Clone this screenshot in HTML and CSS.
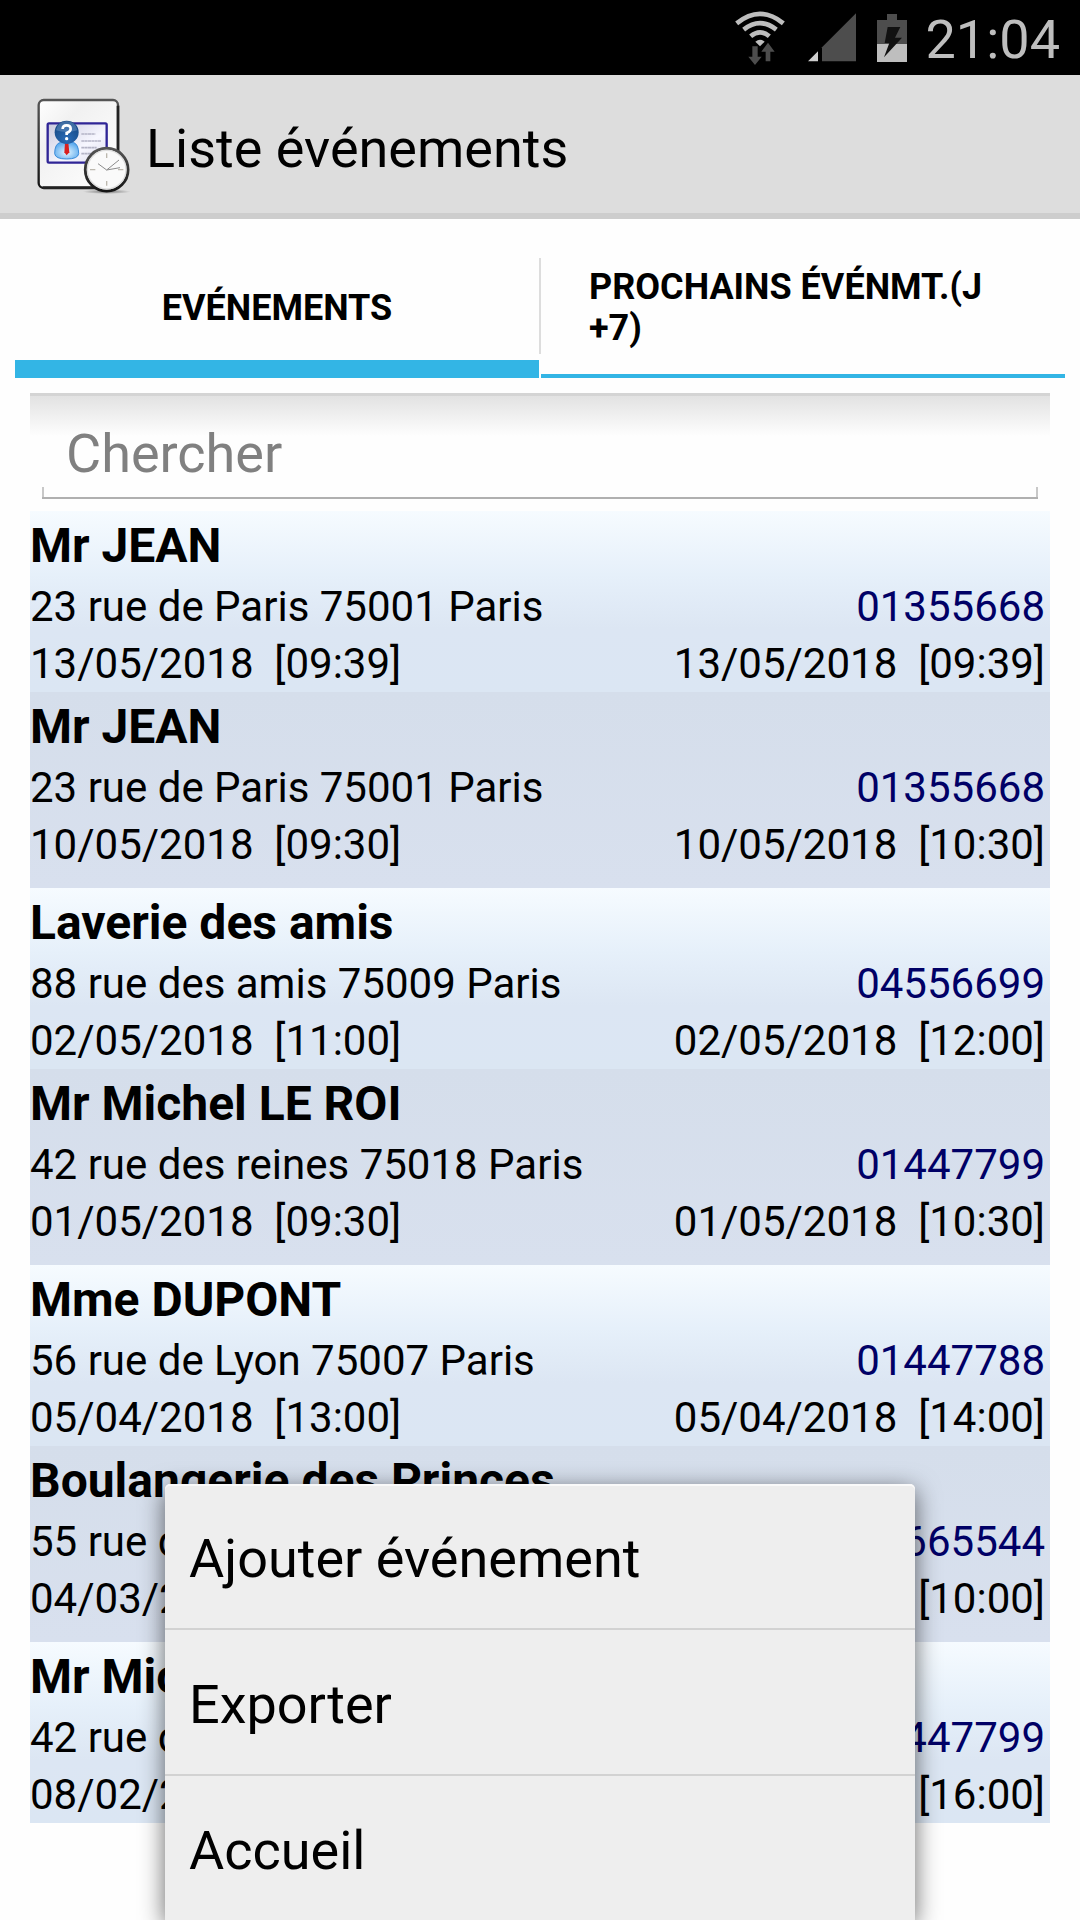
FILE: index.html
```html
<!DOCTYPE html>
<html lang="fr">
<head>
    <meta charset="UTF-8">
    <meta name="viewport" content="width=device-width, initial-scale=1.0">
    <title>Liste événements</title>
    <link rel="stylesheet" href="styles.css">
</head>
<body>

<div id="status-bar">
    <!-- Wifi -->
    <svg class="wifi" width="50" height="54" viewBox="0 0 150 162" fill="none">
        <g stroke="#bebebe" stroke-width="14">
            <path d="M5 37Q75 -20 145 37"/>
            <path d="M26 56Q75 17 124 56"/>
            <path d="M47 76Q75 52 103 76"/>
        </g>
        <path d="M61 92Q75 80 89 92L75 106Z" fill="#bebebe"/>
        <path d="M52 106H68V137H80L60 162L40 137H52ZM92 151V122H79L99 95L119 122H106V151Z" fill="#4d4d4d"/>
    </svg>
    <!-- Signal -->
    <svg class="signal" width="48" height="49" viewBox="0 0 144 147">
        <path d="M0 145L30 115V145Z" fill="#cfcfcf"/>
        <path d="M42 103L144 1V145H42Z" fill="#4d4d4d"/>
    </svg>
    <!-- Battery -->
    <svg class="battery" width="30" height="48" viewBox="0 0 90 144">
        <path d="M30 0H60V18H90V90H0V18H30Z" fill="#4d4d4d"/>
        <path d="M0 90H90V144H0Z" fill="#bebebe"/>
        <path d="M32 39H70L54 71H75L21 130L37 87H23Z" fill="#111"/>
    </svg>
    <span id="clock">21:04</span>
</div>

<div id="header">
    <svg width="110" height="110" viewBox="0 0 330 330">
        <defs>
            <linearGradient id="sheet" x1="0" y1="0" x2="1" y2="1">
                <stop offset="0" stop-color="#fff"/>
                <stop offset="0.3" stop-color="#f1f1f1"/>
                <stop offset="1" stop-color="#fff"/>
            </linearGradient>
            <linearGradient id="edge" x1="0" y1="0" x2="0" y2="1">
                <stop offset="0" stop-color="#555"/>
                <stop offset="1" stop-color="#151515"/>
            </linearGradient>
            <linearGradient id="card" x1="0" y1="0" x2="1" y2="1">
                <stop offset="0" stop-color="#c9c9dd"/>
                <stop offset="0.6" stop-color="#f7f7ff"/>
                <stop offset="1" stop-color="#dcdcec"/>
            </linearGradient>
            <radialGradient id="head" cx="0.5" cy="0.8" r="0.8">
                <stop offset="0" stop-color="#2a6cb8"/>
                <stop offset="1" stop-color="#14457f"/>
            </radialGradient>
            <radialGradient id="bust" cx="0.5" cy="0.6" r="0.6">
                <stop offset="0" stop-color="#e6f6ff"/>
                <stop offset="1" stop-color="#5aa9ee"/>
            </radialGradient>
            <radialGradient id="shade">
                <stop offset="0" stop-color="#777"/>
                <stop offset="1" stop-color="#777" stop-opacity="0"/>
            </radialGradient>
        </defs>
        <rect x="26" y="33" width="238" height="264" rx="15" fill="url(#sheet)" stroke="url(#edge)" stroke-width="7"/>
        <path d="M38 296H250Q264 296 264 280V50" fill="none" stroke="#222" stroke-width="8"/>
        <rect x="53" y="103" width="177" height="118" rx="4" fill="url(#card)" stroke="#2f2596" stroke-width="7"/>
        <g stroke="#b4b4c6" stroke-width="5" stroke-dasharray="9 1">
            <path d="M154 135H196M154 156H213M154 176H200M154 194H190"/>
        </g>
        <path d="M74 194Q74 164 92 160H130Q146 166 146 194Q144 210 110 210Q76 210 74 194Z" fill="url(#bust)" stroke="#3b8bd8" stroke-width="3"/>
        <path d="M105 162H115L118 190L110 199L103 190Z" fill="#d92020"/>
        <ellipse cx="110" cy="130" rx="36" ry="35" fill="url(#head)"/>
        <path d="M78 124Q82 98 110 96Q138 98 142 124Q110 134 78 124Z" fill="#7fa6cf" opacity="0.4"/>
        <path d="M98 120Q98 109 110 109Q122 109 122 120Q122 127 110 132V138" fill="none" stroke="#fff" stroke-width="8"/>
        <circle cx="110" cy="149" r="5" fill="#fff"/>
        <ellipse cx="230" cy="308" rx="72" ry="7" fill="url(#shade)"/>
        <circle cx="230" cy="242" r="64" fill="#fafafa" stroke="url(#edge)" stroke-width="9"/>
        <circle cx="230" cy="242" r="58" fill="none" stroke="#ddd" stroke-width="4"/>
        <path d="M230 193V207M230 276V290M180 242H196M264 242H280" stroke="#bcb8ae" stroke-width="4"/>
        <path d="M230 243L267 213M230 243L204 224M230 243L270 236" stroke="#8c8c8c" stroke-width="3" fill="none"/>
    </svg>
    <h1>Liste événements</h1>
</div>

<div id="tabs" role="tablist">
    <button class="tab active" type="button" role="tab" aria-selected="true"><span>EVÉNEMENTS</span></button>
    <div class="divider"></div>
    <button class="tab" type="button" role="tab" aria-selected="false"><span>PROCHAINS ÉVÉNMT.(J<wbr>+7)</span></button>
</div>

<div id="content">
    <div id="search-box">
        <input id="search" type="text" placeholder="Chercher" aria-label="Chercher">
    </div>

    <ul id="events">
        <li class="event">
            <h2>Mr JEAN</h2>
            <div class="line"><span>23 rue de Paris 75001 Paris</span><a href="tel:01355668">01355668</a></div>
            <div class="line"><span>13/05/2018  [09:39]</span><span>13/05/2018  [09:39]</span></div>
        </li>
        <li class="event">
            <h2>Mr JEAN</h2>
            <div class="line"><span>23 rue de Paris 75001 Paris</span><a href="tel:01355668">01355668</a></div>
            <div class="line"><span>10/05/2018  [09:30]</span><span>10/05/2018  [10:30]</span></div>
        </li>
        <li class="event">
            <h2>Laverie des amis</h2>
            <div class="line"><span>88 rue des amis 75009 Paris</span><a href="tel:04556699">04556699</a></div>
            <div class="line"><span>02/05/2018  [11:00]</span><span>02/05/2018  [12:00]</span></div>
        </li>
        <li class="event">
            <h2>Mr Michel LE ROI</h2>
            <div class="line"><span>42 rue des reines 75018 Paris</span><a href="tel:01447799">01447799</a></div>
            <div class="line"><span>01/05/2018  [09:30]</span><span>01/05/2018  [10:30]</span></div>
        </li>
        <li class="event">
            <h2>Mme DUPONT</h2>
            <div class="line"><span>56 rue de Lyon 75007 Paris</span><a href="tel:01447788">01447788</a></div>
            <div class="line"><span>05/04/2018  [13:00]</span><span>05/04/2018  [14:00]</span></div>
        </li>
        <li class="event">
            <h2>Boulangerie des Princes</h2>
            <div class="line"><span>55 rue de Paris 75001 Paris</span><a href="tel:01665544">01665544</a></div>
            <div class="line"><span>04/03/2018  [09:00]</span><span>04/03/2018  [10:00]</span></div>
        </li>
        <li class="event">
            <h2>Mr Michel LE ROI</h2>
            <div class="line"><span>42 rue des reines 75018 Paris</span><a href="tel:01447799">01447799</a></div>
            <div class="line"><span>08/02/2018  [15:00]</span><span>08/02/2018  [16:00]</span></div>
        </li>
    </ul>
</div>

<!-- Options menu -->
<div id="menu" role="menu">
    <button type="button" role="menuitem">Ajouter événement</button>
    <button type="button" role="menuitem">Exporter</button>
    <button type="button" role="menuitem">Accueil</button>
</div>

</body>
</html>
```
FILE: styles.css
```css
* {
    box-sizing: border-box;
}
body {
    font-family: Roboto, sans-serif;
    margin: 0;
    background-color: #fefefe;
    color: #000;
}
h1, h2 {
    margin: 0;
}
button, input {
    font-family: inherit;
    color: inherit;
    border: none;
    border-radius: 0;
}
#status-bar {
    height: 75px;
    padding: 0 20px;
    background-color: #000;
    display: flex;
    align-items: center;
    justify-content: flex-end;
}
.wifi {
    margin-right: 23px;
}
.signal {
    margin-right: 21px;
}
.battery {
    margin-right: 19px;
}
#clock {
    font-size: 54px;
    line-height: 64px;
    padding-top: 4px;
    color: #bebebe;
}
#header {
    height: 144px;
    padding: 0 30px;
    background-color: #ddd;
    border-bottom: 6px solid #cdcdcd;
    display: flex;
    align-items: center;
    gap: 6px;
}
#header h1 {
    font-size: 54px;
    line-height: 64px;
    font-weight: normal;
    padding-top: 10px;
}
#tabs {
    display: flex;
    align-items: center;
    padding: 15px 15px 0;
}
.tab {
    flex: 1;
    height: 144px;
    padding: 4px 48px 0;
    background: none;
    box-shadow: inset 0 -4px #33b5e5;
    display: flex;
    align-items: center;
    justify-content: center;
    font-size: 36px;
    line-height: 41px;
    font-weight: bold;
    text-align: left;
}
.tab.active {
    box-shadow: inset 0 -18px #33b5e5;
}
.divider {
    width: 2px;
    height: 96px;
    background-color: #ddd;
}
#content {
    padding: 15px 30px 0;
}
#search-box {
    padding: 11px 12px 12px;
    border-top: 3px solid #d4d4d4;
    background: linear-gradient(#e2e2e2, #fefefe) no-repeat;
    background-size: 100% 40px;
}
#search {
    display: block;
    width: 100%;
    height: 92px;
    padding: 2px 24px 0;
    font-size: 54px;
    outline: none;
    border-bottom: 2px solid #b0b0b0;
    /* small ticks at both ends of the underline */
    background:
        linear-gradient(#c8c8c8, #c8c8c8) left bottom / 2px 10px no-repeat,
        linear-gradient(#c8c8c8, #c8c8c8) right bottom / 2px 10px no-repeat;
}
#search::placeholder {
    color: #808080;
    opacity: 1;
}
#events {
    list-style: none;
    margin: 0;
    padding: 0;
}
.event {
    padding: 3px 5px 0 0;
    background: linear-gradient(#f6fbff, #e6f0fa 35%, #dce6f3 65%, #dbe6f3);
}
.event:nth-child(even) {
    padding-bottom: 15px;
    background: linear-gradient(#d5deeb, #d8e0ee);
}
.event h2 {
    font-size: 48px;
    line-height: 64px;
    font-weight: bold;
}
.line {
    display: flex;
    justify-content: space-between;
    font-size: 42px;
    line-height: 57px;
    white-space: pre;
}
.line a {
    color: #000066;
    text-decoration: none;
}
#menu {
    position: fixed;
    left: 0;
    right: 0;
    bottom: 0;
    max-width: 750px;
    margin: 0 auto;
    background-color: #eee;
    border-radius: 5px 5px 0 0;
    box-shadow: 0 6px 24px rgba(0, 0, 0, 0.6), inset 0 2px #fafafa;
}
#menu button {
    display: block;
    width: 100%;
    height: 144px;
    padding: 4px 24px 0;
    background: none;
    font-size: 54px;
    text-align: left;
}
#menu button + button {
    height: 146px;
    border-top: 2px solid #d2d2d2;
}
```
